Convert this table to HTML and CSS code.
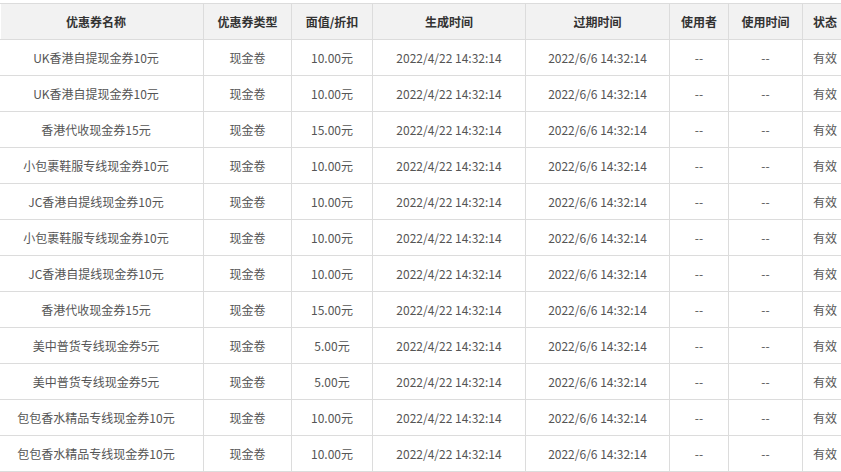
FILE: index.html
```html
<!DOCTYPE html>
<html lang="zh-CN">
<head>
<meta charset="utf-8">
<title>优惠券列表</title>
<link rel="stylesheet" href="styles.css">
</head>
<body>
<div class="wrap">
<table class="coupons">
  <colgroup>
    <col class="c-name"><col class="c-type"><col class="c-value"><col class="c-created"><col class="c-expire"><col class="c-user"><col class="c-used"><col class="c-status">
  </colgroup>
  <thead>
    <tr><th class="first">优惠券名称</th><th>优惠券类型</th><th>面值/折扣</th><th>生成时间</th><th>过期时间</th><th>使用者</th><th>使用时间</th><th class="last">状态</th></tr>
  </thead>
  <tbody>
    <tr><td class="first">UK香港自提现金券10元</td><td>现金卷</td><td>10.00元</td><td>2022/4/22 14:32:14</td><td>2022/6/6 14:32:14</td><td>--</td><td>--</td><td class="last">有效</td></tr>
    <tr><td class="first">UK香港自提现金券10元</td><td>现金卷</td><td>10.00元</td><td>2022/4/22 14:32:14</td><td>2022/6/6 14:32:14</td><td>--</td><td>--</td><td class="last">有效</td></tr>
    <tr><td class="first">香港代收现金券15元</td><td>现金卷</td><td>15.00元</td><td>2022/4/22 14:32:14</td><td>2022/6/6 14:32:14</td><td>--</td><td>--</td><td class="last">有效</td></tr>
    <tr><td class="first">小包裹鞋服专线现金券10元</td><td>现金卷</td><td>10.00元</td><td>2022/4/22 14:32:14</td><td>2022/6/6 14:32:14</td><td>--</td><td>--</td><td class="last">有效</td></tr>
    <tr><td class="first">JC香港自提线现金券10元</td><td>现金卷</td><td>10.00元</td><td>2022/4/22 14:32:14</td><td>2022/6/6 14:32:14</td><td>--</td><td>--</td><td class="last">有效</td></tr>
    <tr><td class="first">小包裹鞋服专线现金券10元</td><td>现金卷</td><td>10.00元</td><td>2022/4/22 14:32:14</td><td>2022/6/6 14:32:14</td><td>--</td><td>--</td><td class="last">有效</td></tr>
    <tr><td class="first">JC香港自提线现金券10元</td><td>现金卷</td><td>10.00元</td><td>2022/4/22 14:32:14</td><td>2022/6/6 14:32:14</td><td>--</td><td>--</td><td class="last">有效</td></tr>
    <tr><td class="first">香港代收现金券15元</td><td>现金卷</td><td>15.00元</td><td>2022/4/22 14:32:14</td><td>2022/6/6 14:32:14</td><td>--</td><td>--</td><td class="last">有效</td></tr>
    <tr><td class="first">美中普货专线现金券5元</td><td>现金卷</td><td>5.00元</td><td>2022/4/22 14:32:14</td><td>2022/6/6 14:32:14</td><td>--</td><td>--</td><td class="last">有效</td></tr>
    <tr><td class="first">美中普货专线现金券5元</td><td>现金卷</td><td>5.00元</td><td>2022/4/22 14:32:14</td><td>2022/6/6 14:32:14</td><td>--</td><td>--</td><td class="last">有效</td></tr>
    <tr><td class="first">包包香水精品专线现金券10元</td><td>现金卷</td><td>10.00元</td><td>2022/4/22 14:32:14</td><td>2022/6/6 14:32:14</td><td>--</td><td>--</td><td class="last">有效</td></tr>
    <tr><td class="first">包包香水精品专线现金券10元</td><td>现金卷</td><td>10.00元</td><td>2022/4/22 14:32:14</td><td>2022/6/6 14:32:14</td><td>--</td><td>--</td><td class="last">有效</td></tr>
  </tbody>
</table>
</div>
</body>
</html>
```

FILE: styles.css
```css
html, body {
  margin: 0;
  padding: 0;
  background: #fff;
  overflow: hidden;
}
.wrap {
  padding-top: 3px;
}
.coupons {
  border-collapse: collapse;
  table-layout: fixed;
  width: 860px;
  font-family: "Noto Sans CJK SC", "Noto Sans", sans-serif;
  font-size: 12px;
  color: #555;
}
.c-name { width: 203px; }
.c-type { width: 88px; }
.c-value { width: 81px; }
.c-created { width: 153px; }
.c-expire { width: 144px; }
.c-user { width: 59px; }
.c-used { width: 74px; }
.c-status { width: 58px; }
.coupons th,
.coupons td {
  border: 1px solid #dcdcdc;
  height: 35px;
  padding: 0;
  text-align: center;
  white-space: nowrap;
  overflow: hidden;
}
.coupons th {
  background: #f2f2f2;
  color: #333;
  font-weight: bold;
}
.coupons .first {
  padding-right: 12px;
  border-left-color: transparent;
}
.coupons .last {
  text-align: left;
  padding-left: 10px;
}
```
